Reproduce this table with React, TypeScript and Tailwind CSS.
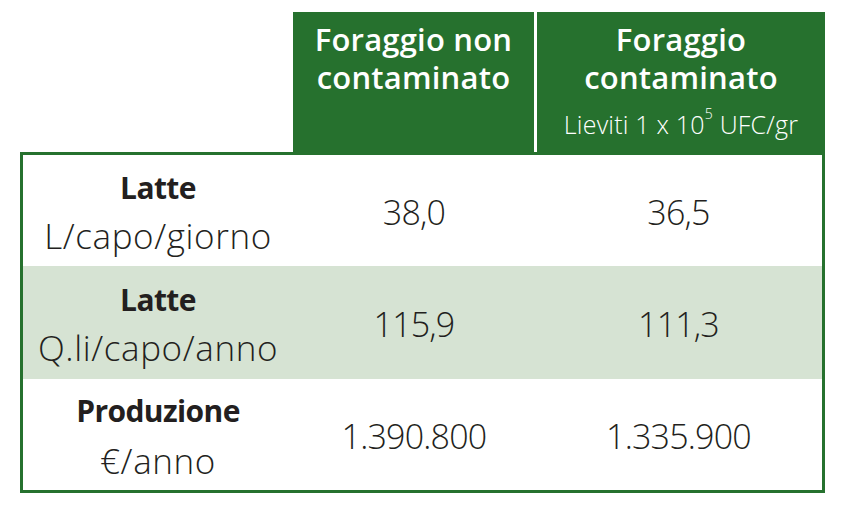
export default function App() {
  const rows = [
    { label: "Latte", unit: "L/capo/giorno", a: "38,0", b: "36,5", bg: "bg-white", h: "h-[111px]", gap: "gap-[8px]" },
    { label: "Latte", unit: "Q.li/capo/anno", a: "115,9", b: "111,3", bg: "bg-[#d6e3d3]", h: "h-[113px]", gap: "gap-[8px]" },
    { label: "Produzione", unit: "€/anno", a: "1.390.800", b: "1.335.900", bg: "bg-white", h: "h-[111px]", gap: "gap-[10px]" },
  ];

  return (
    <div
      className="w-[843px] h-[505px] bg-white pl-[20px] pt-[12px]"
      style={{ fontFamily: "'Open Sans', 'Noto Sans', sans-serif" }}
    >
      {/* header */}
      <div className="flex h-[140px]">
        <div className="w-[273px]" />
        <div className="w-[241px] bg-[#26712e] text-white text-center pt-[8px]">
          <div className="text-[31px] font-semibold leading-[38px] tracking-[0.2px]">
            Foraggio non
            <br />
            contaminato
          </div>
        </div>
        <div className="w-[3px]" />
        <div className="w-[288px] bg-[#26712e] text-white text-center pt-[8px]">
          <div className="text-[31px] font-semibold leading-[38px] tracking-[0.2px]">
            Foraggio
            <br />
            contaminato
          </div>
          <div className="text-[25px] font-light leading-[30px] mt-[13px] tracking-[0.2px]">
            Lieviti 1 x 10<sup className="text-[14px] align-[8px]">5</sup> UFC/gr
          </div>
        </div>
      </div>

      {/* table */}
      <div className="w-[805px] border-[3px] border-[#26712e] text-[#231f20]">
        {rows.map((r, i) => (
          <div key={i} className={`flex items-center ${r.h} ${r.bg}`}>
            <div className={`w-[270px] flex flex-col items-center ${r.gap} mt-[2px]`}>
              <div className="text-[30px] font-bold leading-[40px] tracking-[-0.6px]">{r.label}</div>
              <div className="text-[35px] font-light leading-[40px] tracking-[0.6px]">{r.unit}</div>
            </div>
            <div className="w-[242px] text-center text-[34px] font-light tracking-[-0.8px] mt-[4px]">{r.a}</div>
            <div className="flex-1 text-center text-[34px] font-light tracking-[-0.8px] mt-[4px]">{r.b}</div>
          </div>
        ))}
      </div>
    </div>
  );
}
